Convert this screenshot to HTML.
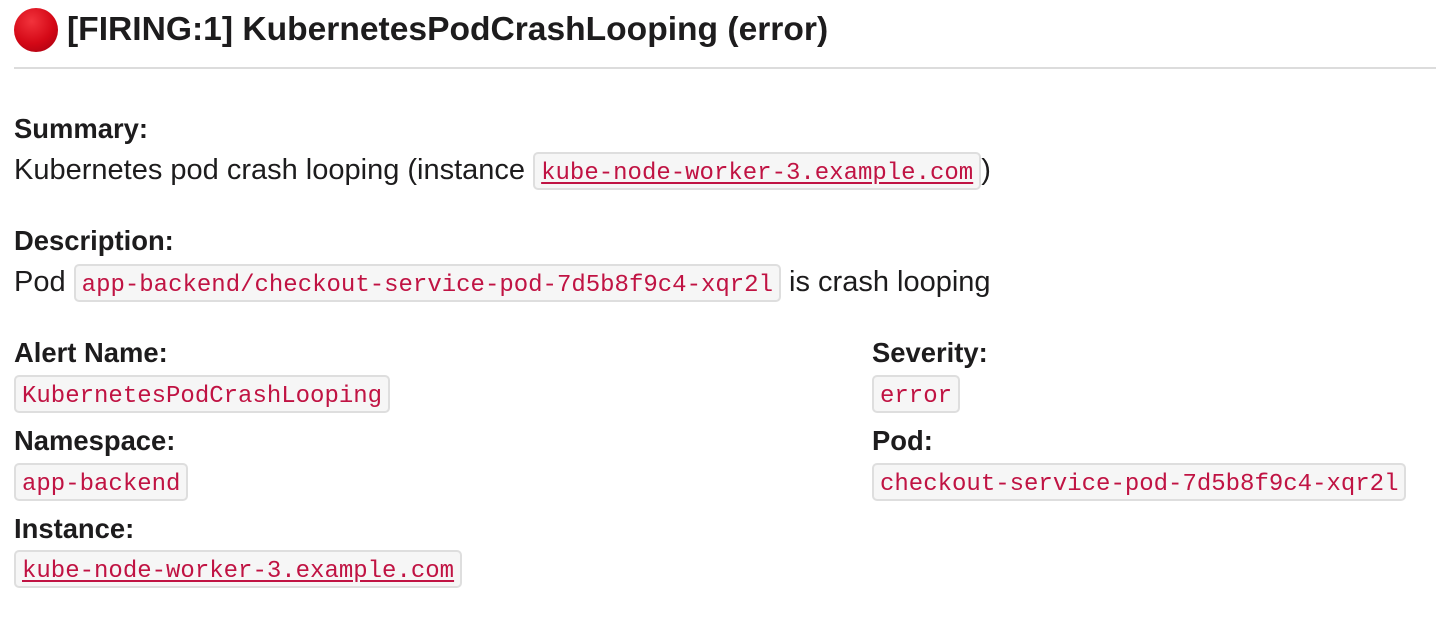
<!DOCTYPE html>
<html><head><meta charset="utf-8"><style>
body{margin:0;width:1436px;height:622px;background:#fff;position:relative;font-family:"Liberation Sans",sans-serif;color:#1d1c1d;overflow:hidden}
.a{position:absolute;white-space:nowrap}
.t{font-size:29px;line-height:28px}
.b{font-weight:bold;font-size:27.4px}
code{font-family:"Liberation Mono","DejaVu Sans Mono",monospace;font-size:24px;color:#c01343;background:#f6f6f6;border:2px solid #dedede;border-radius:5px;padding:3px 6px 0 6px;display:inline-block;height:31px;line-height:34px;vertical-align:middle;box-sizing:content-box}
code.u{text-decoration:underline;text-underline-offset:3px}
</style></head><body>
<div class="a" style="left:14px;top:8px;width:44px;height:44px;border-radius:50%;background:radial-gradient(circle at 40% 30%,#f2333c 0%,#d40816 55%,#a00010 100%)"></div>
<div class="a" style="left:67px;top:12px;font-size:33.6px;line-height:36px;font-weight:bold">[FIRING:1] KubernetesPodCrashLooping (error)</div>
<div class="a" style="left:14px;top:67px;width:1422px;height:2px;background:#dcdcdc"></div>

<div class="a t b" style="left:14px;top:115px">Summary:</div>
<div class="a t" style="left:14px;top:151px;height:38px;line-height:38px">Kubernetes pod crash looping (instance <code class="u">kube-node-worker-3.example.com</code>)</div>

<div class="a t b" style="left:14px;top:227px">Description:</div>
<div class="a t" style="left:14px;top:263px;height:38px;line-height:38px">Pod <code>app-backend/checkout-service-pod-7d5b8f9c4-xqr2l</code> is crash looping</div>

<div class="a t b" style="left:14px;top:339px">Alert Name:</div>
<div class="a" style="left:14px;top:375px"><code>KubernetesPodCrashLooping</code></div>
<div class="a t b" style="left:14px;top:427px">Namespace:</div>
<div class="a" style="left:14px;top:463px"><code>app-backend</code></div>
<div class="a t b" style="left:14px;top:515px">Instance:</div>
<div class="a" style="left:14px;top:550px"><code class="u">kube-node-worker-3.example.com</code></div>

<div class="a t b" style="left:872px;top:339px">Severity:</div>
<div class="a" style="left:872px;top:375px"><code>error</code></div>
<div class="a t b" style="left:872px;top:427px">Pod:</div>
<div class="a" style="left:872px;top:463px"><code>checkout-service-pod-7d5b8f9c4-xqr2l</code></div>
</body></html>
